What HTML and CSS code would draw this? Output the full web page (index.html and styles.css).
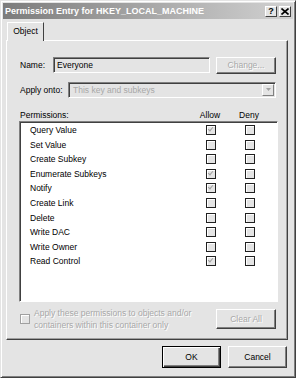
FILE: index.html
```html
<!DOCTYPE html>
<html lang="en">
<head>
  <meta charset="UTF-8" />
  <title>Permission Entry for HKEY_LOCAL_MACHINE</title>
  <link rel="stylesheet" href="styles.css">
</head>
<body>
  <div class="window">
    <div class="titlebar">
      <span class="title">Permission Entry for HKEY_LOCAL_MACHINE</span>
      <div class="title-btns">
        <span class="tbtn">?</span>
        <span class="tbtn close">
          <svg width="8" height="7" viewBox="0 0 8 7"><path d="M0.5 0.5 L7.5 6.5 M7.5 0.5 L0.5 6.5" stroke="#000" stroke-width="1.6"/></svg>
        </span>
      </div>
    </div>

    <div class="content">
      <div class="tabs">
        <div class="tab">Object</div>
      </div>

      <div class="panel">
        <div class="row name-row">
          <span class="label">Name:</span>
          <div class="field">Everyone</div>
          <button class="btn disabled change-btn">Change...</button>
        </div>

        <div class="row apply-row">
          <span class="label">Apply onto:</span>
          <div class="combo">
            <span>This key and subkeys</span>
            <span class="combo-arrow">
              <svg width="5" height="3" viewBox="0 0 5 3"><path d="M0 0 H5 L2.5 3 Z" fill="#a0a0a0"/></svg>
            </span>
          </div>
        </div>

        <div class="perm-head">
          <span>Permissions:</span>
          <span class="col">Allow</span>
          <span class="col">Deny</span>
        </div>

        <div class="list">
          <div class="perm"><span>Query Value</span><span class="col"><i class="cb checked"></i></span><span class="col"><i class="cb"></i></span></div>
          <div class="perm"><span>Set Value</span><span class="col"><i class="cb"></i></span><span class="col"><i class="cb"></i></span></div>
          <div class="perm"><span>Create Subkey</span><span class="col"><i class="cb"></i></span><span class="col"><i class="cb"></i></span></div>
          <div class="perm"><span>Enumerate Subkeys</span><span class="col"><i class="cb checked"></i></span><span class="col"><i class="cb"></i></span></div>
          <div class="perm"><span>Notify</span><span class="col"><i class="cb checked"></i></span><span class="col"><i class="cb"></i></span></div>
          <div class="perm"><span>Create Link</span><span class="col"><i class="cb"></i></span><span class="col"><i class="cb"></i></span></div>
          <div class="perm"><span>Delete</span><span class="col"><i class="cb"></i></span><span class="col"><i class="cb"></i></span></div>
          <div class="perm"><span>Write DAC</span><span class="col"><i class="cb"></i></span><span class="col"><i class="cb"></i></span></div>
          <div class="perm"><span>Write Owner</span><span class="col"><i class="cb"></i></span><span class="col"><i class="cb"></i></span></div>
          <div class="perm"><span>Read Control</span><span class="col"><i class="cb checked"></i></span><span class="col"><i class="cb"></i></span></div>
        </div>

        <div class="row bottom-row">
          <i class="cb dim"></i>
          <span class="apply-text">Apply these permissions to objects and/or containers within this container only</span>
          <button class="btn disabled clear-btn">Clear All</button>
        </div>
      </div>

      <div class="footer">
        <button class="btn default">OK</button>
        <button class="btn">Cancel</button>
      </div>
    </div>
  </div>
</body>
</html>
```

FILE: styles.css
```css
body {
  margin: 0;
  font-family: "Liberation Sans", Arial, sans-serif;
  font-size: 8.5px;
  color: #000;
  background: #e4e4e4;
}
.window {
  width: 296px;
  height: 378px;
  box-sizing: border-box;
  background: #e4e4e4;
  border: 1px solid;
  border-color: #e4e4e4 #404040 #404040 #e4e4e4;
  box-shadow: inset 1px 1px 0 #fff, inset -1px -1px 0 #808080;
  padding: 2px;
}
.titlebar {
  height: 16px;
  display: flex;
  align-items: center;
  justify-content: space-between;
  background: linear-gradient(to right, #7c7c7c, #d2d2d2);
  color: #fff;
  font-weight: bold;
  font-size: 9px;
  padding: 0 2px 0 2px;
}
.title-btns {
  display: flex;
  gap: 2px;
}
.tbtn {
  width: 12px;
  height: 11px;
  box-sizing: border-box;
  background: #e4e4e4;
  border: 1px solid;
  border-color: #fff #404040 #404040 #fff;
  color: #000;
  font-size: 9px;
  font-weight: bold;
  display: flex;
  align-items: center;
  justify-content: center;
  line-height: 1;
}
.content {
  padding: 3px 5px 0 3px;
}
.tabs {
  display: flex;
  height: 18px;
  padding-left: 1px;
}
.tab {
  width: 37px;
  height: 19px;
  box-sizing: border-box;
  border: 1px solid;
  border-color: #fff #404040 transparent #fff;
  border-bottom: none;
  background: #e4e4e4;
  text-align: center;
  line-height: 17px;
  position: relative;
  z-index: 1;
}
.panel {
  height: 300px;
  box-sizing: border-box;
  border: 1px solid;
  border-color: #fff #404040 #404040 #fff;
  box-shadow: inset -1px -1px 0 #a0a0a0;
  padding: 16px 9px 0 12px;
}
.row {
  display: flex;
  align-items: center;
}
.label {
  padding-left: 1px;
}
.name-row {
  height: 16px;
}
.name-row .label {
  width: 33px;
}
.field {
  width: 157px;
  height: 16px;
  box-sizing: border-box;
  border: 1px solid;
  border-color: #808080 #fff #fff #808080;
  box-shadow: inset 1px 1px 0 #404040;
  padding: 2px 3px;
  line-height: 11px;
}
.btn {
  font-family: inherit;
  font-size: 8.5px;
  background: #e4e4e4;
  color: #000;
  border: 1px solid;
  border-color: #fff #404040 #404040 #fff;
  box-shadow: inset -1px -1px 0 #808080;
  padding: 0;
}
.btn.disabled {
  color: #a8a8a8;
  text-shadow: 1px 1px 0 #fff;
}
.change-btn {
  width: 60px;
  height: 17px;
  margin-left: 6px;
}
.apply-row {
  margin-top: 9px;
  height: 15px;
}
.apply-row .label {
  width: 48px;
}
.combo {
  width: 208px;
  height: 16px;
  box-sizing: border-box;
  border: 1px solid;
  border-color: #808080 #fff #fff #808080;
  box-shadow: inset 1px 1px 0 #404040;
  display: flex;
  align-items: center;
  justify-content: space-between;
  color: #a8a8a8;
  padding: 1px 1px 1px 4px;
}
.combo-arrow {
  width: 12px;
  height: 12px;
  box-sizing: border-box;
  border: 1px solid;
  border-color: #fff #808080 #808080 #fff;
  display: flex;
  align-items: center;
  justify-content: center;
}
.perm-head {
  display: grid;
  grid-template-columns: 1fr 30px 30px;
  column-gap: 9px;
  padding: 0 14px 0 1px;
  margin-top: 12px;
  height: 12px;
  line-height: 12px;
}
.col {
  display: flex;
  justify-content: center;
  align-items: center;
}
.list {
  height: 181px;
  box-sizing: border-box;
  background: #fff;
  border: 1px solid;
  border-color: #808080 #fff #fff #808080;
  box-shadow: inset 1px 1px 0 #404040;
  padding: 1px 12px 0 10px;
}
.perm {
  display: grid;
  grid-template-columns: 1fr 30px 30px;
  column-gap: 9px;
  height: 14.55px;
  align-items: center;
}
.cb {
  display: block;
  width: 10px;
  height: 10px;
  box-sizing: border-box;
  border: 1px solid;
  border-color: #404040 #fff #fff #404040;
  box-shadow: inset 1px 1px 0 #808080, 0 0 0 0 transparent;
  outline: 1px solid #808080;
  outline-offset: -1px;
  background: #e4e4e4;
  position: relative;
}
.cb {
  outline: none;
  border: 1px solid #202020;
  box-shadow: inset 1px 1px 0 #fff;
}
.cb.checked::after {
  content: "";
  position: absolute;
  left: 2px;
  top: 0px;
  width: 2px;
  height: 4px;
  border: solid #a0a0a0;
  border-width: 0 1.5px 1.5px 0;
  transform: rotate(40deg);
}
.cb.dim {
  border-color: #a0a0a0;
  box-shadow: inset 1px 1px 0 #fff;
  margin: 0 4px 0 1px;
  flex: none;
}
.bottom-row {
  margin-top: 7px;
  height: 20px;
  align-items: center;
}
.apply-text {
  width: 166px;
  color: #a8a8a8;
  text-shadow: 1px 1px 0 #fff;
  line-height: 12px;
  margin-right: 16px;
  flex: none;
}
.clear-btn {
  width: 60px;
  height: 20px;
}
.footer {
  display: flex;
  justify-content: flex-end;
  gap: 7px;
  margin-top: 6px;
  padding-right: 1px;
}
.footer .btn {
  width: 59px;
  height: 22px;
}
.footer .btn.default {
  border: 1px solid #000;
  box-shadow: inset 1px 1px 0 #fff, inset -1px -1px 0 #404040, inset -2px -2px 0 #808080;
}
```
